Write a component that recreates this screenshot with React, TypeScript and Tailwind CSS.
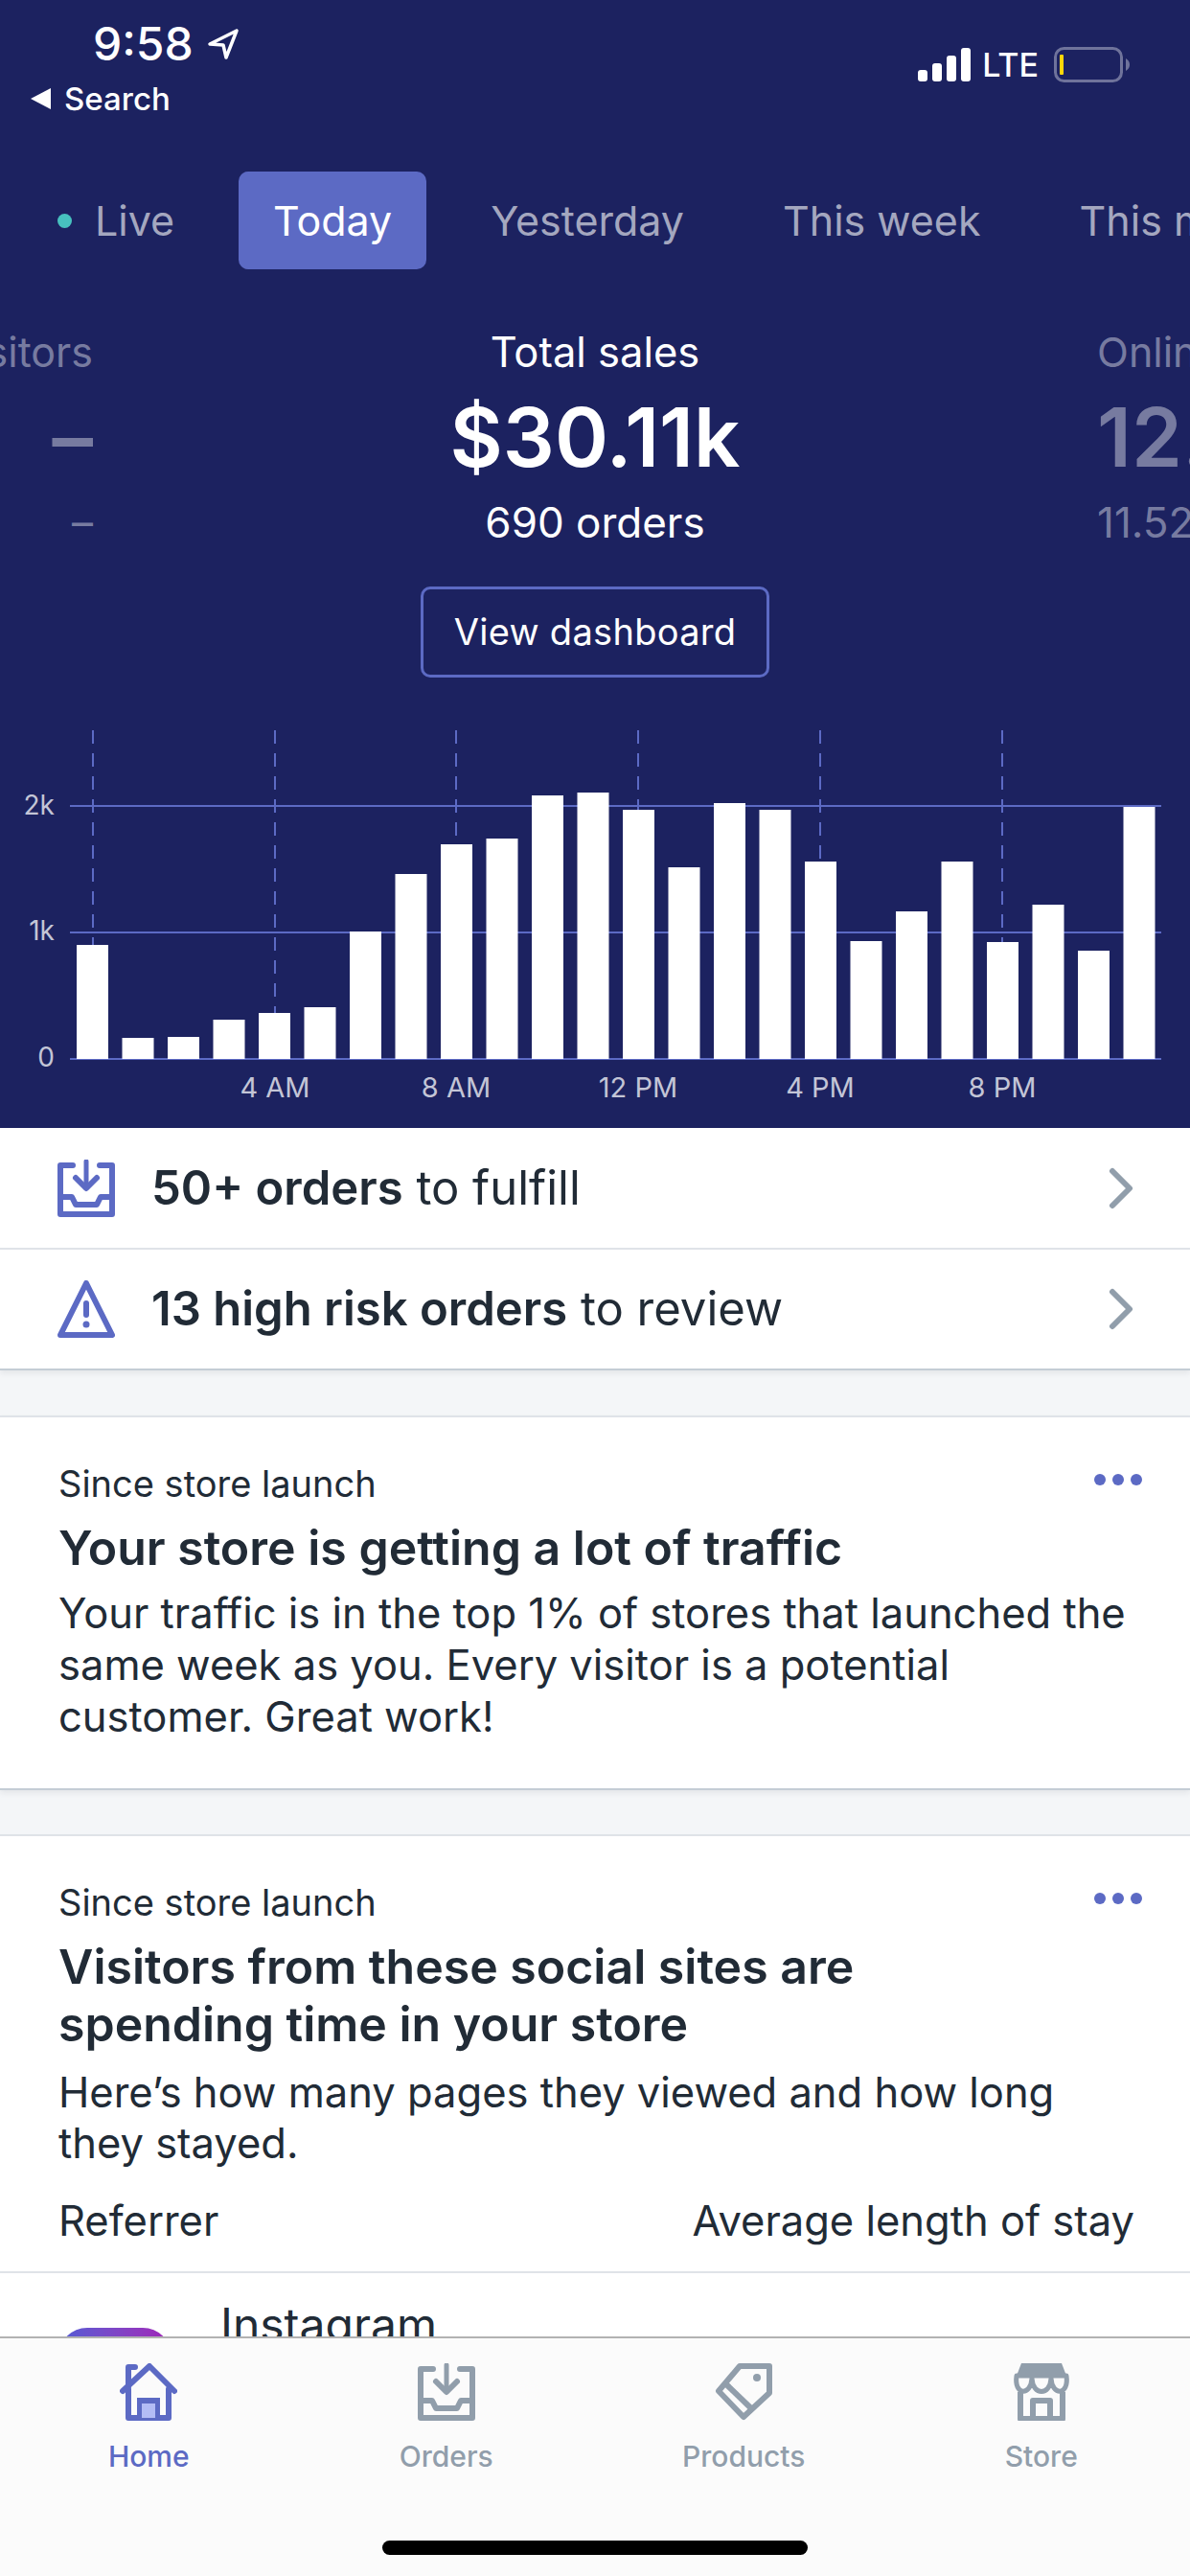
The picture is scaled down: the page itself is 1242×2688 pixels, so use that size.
// Shopify home screen: sales header, alerts and insight cards
import React from "react";

// top of each bar in page pixels, baseline is 1105
const barTops = [986, 1083, 1082, 1064, 1057, 1051, 972, 912, 881, 875, 830, 827, 845, 905, 838, 845, 899, 982, 951, 899, 983, 944, 992, 842];
const hourLines = [97, 287, 476, 666, 856, 1046];
const hourLabels = [
  { x: 287, label: "4 AM" },
  { x: 476, label: "8 AM" },
  { x: 666, label: "12 PM" },
  { x: 856, label: "4 PM" },
  { x: 1046, label: "8 PM" },
];

function SalesChart() {
  return (
    <svg width="1242" height="427" viewBox="0 750 1242 427" className="block">
      {hourLines.map((x) => (
        <line key={x} x1={x} x2={x} y1="762" y2="1105" stroke="#5c6ac4" strokeWidth="2" strokeDasharray="14 10" />
      ))}
      {[841, 973, 1105].map((y) => (
        <line key={y} x1="73" x2="1212" y1={y} y2={y} stroke="#5c6ac4" strokeWidth="2" />
      ))}
      {barTops.map((top, i) => (
        <rect key={i} x={80 + i * 47.5} y={top} width="33" height={1105 - top} fill="#fff" />
      ))}
      <g fill="#c3c5d6" fontFamily="Inter, sans-serif">
        <g fontSize="28">
          <text x="57" y="850" textAnchor="end">2k</text>
          <text x="57" y="981" textAnchor="end">1k</text>
          <text x="57" y="1113" textAnchor="end">0</text>
        </g>
        <g fontSize="29">
          {hourLabels.map((h) => (
            <text key={h.label} x={h.x} y="1145" textAnchor="middle">{h.label}</text>
          ))}
        </g>
      </g>
    </svg>
  );
}

function OrdersIcon({ color, className }: { color: string; className?: string }) {
  return (
    <svg viewBox="0 0 60 60" className={className} fill="none" stroke={color} strokeWidth="6">
      <path d="M16 6H3V57H57V6H44" strokeLinejoin="round" strokeLinecap="round" />
      <path d="M3 39H15L19 47H41L45 39H57" strokeLinejoin="round" />
      <path d="M30 2V28" strokeLinecap="round" strokeWidth="5" />
      <path d="M19 19L30 30L41 19" strokeLinecap="round" strokeLinejoin="round" />
    </svg>
  );
}

function RiskIcon() {
  return (
    <svg viewBox="0 0 60 60" className="w-[60px] h-[60px]" fill="none" stroke="#5c6ac4" strokeWidth="6" strokeLinejoin="round" strokeLinecap="round">
      <path d="M30 3L57 57H3Z" />
      <path d="M30 24V36" />
      <circle cx="30" cy="46" r="3.5" fill="#5c6ac4" stroke="none" />
    </svg>
  );
}

function Chevron() {
  return (
    <svg width="30" height="44" viewBox="0 0 30 44" fill="none" stroke="#919eab" strokeWidth="6" strokeLinecap="round" strokeLinejoin="round">
      <path d="M6 4L24 22L6 40" />
    </svg>
  );
}

function HomeIcon() {
  return (
    <svg viewBox="0 0 60 60" className="w-[60px] h-[60px]" fill="none" stroke="#5c6ac4" strokeWidth="6" strokeLinejoin="round" strokeLinecap="round">
      <path d="M3 29L31 3L57 29" />
      <path d="M9 24V4H16" />
      <path d="M9 27V57H51V27" />
      <rect x="18" y="36" width="24" height="24" fill="#5c6ac4" stroke="none" />
      <rect x="23" y="42" width="14" height="15" fill="#b3bcf5" stroke="none" />
    </svg>
  );
}

function TagIcon() {
  return (
    <svg viewBox="0 0 60 60" className="w-[60px] h-[60px]" fill="none" stroke="#919eab" strokeWidth="6" strokeLinejoin="round">
      <path d="M26 3H57V31L30 56L4 29Z" />
      <path d="M12 22L40 49" />
      <circle cx="44" cy="15" r="4" fill="#919eab" stroke="none" />
    </svg>
  );
}

function StoreIcon() {
  return (
    <svg viewBox="0 0 60 60" className="w-[60px] h-[60px]" fill="none" stroke="#919eab" strokeWidth="5" strokeLinejoin="round">
      <path d="M9 0H51L56 13H4Z" fill="#919eab" stroke="none" />
      <path d="M4 13C1 34 19 34 20 16C21 34 39 34 40 16C41 34 59 34 56 13Z" />
      <path d="M8 30V58H52V30" strokeWidth="6" />
      <path d="M21 58V39H39V58" strokeWidth="6" />
    </svg>
  );
}

function InsightCard({ title, children }: { title: React.ReactNode; children: React.ReactNode }) {
  return (
    <div className="bg-white border-t-2 border-[#dfe3e8] px-[61px] pt-[46px]">
      <div className="flex justify-between">
        <p className="text-[38px] leading-[46px]">Since store launch</p>
        <div className="flex gap-[7px] pt-[13px] -mr-[11px] h-[30px]">
          <span className="w-[12px] h-[12px] rounded-full bg-[#5c6ac4]" />
          <span className="w-[12px] h-[12px] rounded-full bg-[#5c6ac4]" />
          <span className="w-[12px] h-[12px] rounded-full bg-[#5c6ac4]" />
        </div>
      </div>
      <h2 className="text-[50px] leading-[60px] font-semibold mt-[14px]">{title}</h2>
      {children}
    </div>
  );
}

export default function App() {
  const tabs = ["Yesterday", "This week", "This month"];

  return (
    <div className="w-[1242px] h-[2688px] flex flex-col overflow-hidden bg-[#f4f6f8] text-[#212b36] font-[Inter,sans-serif]">
      <main className="flex-1 min-h-0 overflow-hidden">
        <header className="bg-[#1c2260] text-white h-[1177px] flex flex-col">
          {/* status bar */}
          <div className="h-[179px] shrink-0 flex justify-between">
            <div>
              <div className="flex items-center gap-[14px] pl-[97px] pt-[18px]">
                <span className="text-[48px] leading-[56px] font-medium">9:58</span>
                <svg width="34" height="34" viewBox="0 0 34 34" fill="none" stroke="#fff" strokeWidth="3.5" strokeLinejoin="round">
                  <path d="M31 3L3 17L17 18L20 31Z" />
                </svg>
              </div>
              <div className="flex items-center gap-[14px] pl-[32px] mt-[10px]">
                <svg width="21" height="22" viewBox="0 0 21 22"><path d="M21 0V22L0 11Z" fill="#fff" /></svg>
                <span className="text-[33px] leading-[38px] font-medium">Search</span>
              </div>
            </div>
            <div className="flex items-center gap-[14px] h-[37px] mt-[49px] pr-[62px]">
              <svg width="55" height="35" viewBox="0 0 55 35" fill="#fff" className="-mr-[2px]">
                <rect x="0" y="23" width="10" height="12" rx="3" />
                <rect x="15" y="16" width="10" height="19" rx="3" />
                <rect x="30" y="8" width="10" height="27" rx="3" />
                <rect x="45" y="0" width="10" height="35" rx="3" />
              </svg>
              <span className="text-[34px] leading-[37px] font-medium">LTE</span>
              <svg width="80" height="37" viewBox="0 0 80 37" fill="none" className="ml-[2px]">
                <rect x="1.5" y="1.5" width="69" height="34" rx="9" stroke="#6f739b" strokeWidth="3" />
                <rect x="6" y="8" width="4" height="21" rx="1" fill="#ffd60a" />
                <path d="M75 12C78 14 79 16 79 18.500C79 21 78 23 75 25Z" fill="#6f739b" />
              </svg>
            </div>
          </div>

          {/* date range tabs */}
          <div className="flex gap-[31px] pl-[23px] h-[102px] shrink-0 overflow-hidden">
            <div className="flex items-center gap-[24px] pl-[37px] pr-[36px] text-[43px] text-[#a4a7bf] shrink-0">
              <span className="w-[15px] h-[15px] rounded-full bg-[#47c1bf]" />
              Live
            </div>
            <div className="flex items-center justify-center w-[196px] text-[43px] bg-[#5c6ac4] rounded-[10px] shrink-0">Today</div>
            {tabs.map((t) => (
              <div key={t} className="flex items-center px-[36px] text-[43px] text-[#a4a7bf] shrink-0 whitespace-nowrap">{t}</div>
            ))}
          </div>

          {/* sales figures */}
          <div className="grid grid-cols-[97px_1fr_97px] mt-[61px] overflow-hidden">
            <div className="flex flex-col items-end text-[#777ba0] whitespace-nowrap">
              <p className="text-[43px] leading-[50px]">Visitors</p>
              <p className="text-[85px] leading-[100px] font-semibold mt-[15px]">–</p>
              <p className="text-[44px] leading-[50px] mt-[13px]">–</p>
            </div>
            <div className="flex flex-col items-center">
              <p className="text-[43.5px] leading-[50px]">Total sales</p>
              <p className="text-[85px] leading-[100px] font-semibold mt-[15px]">$30.11k</p>
              <p className="text-[44px] leading-[50px] mt-[13px]">690 orders</p>
              <div className="mt-[42px] w-[364px] h-[95px] flex items-center justify-center border-[3px] border-[#5c6ac4] rounded-[10px] text-[38px] tracking-[0.3px]">
                View dashboard
              </div>
            </div>
            <div className="flex flex-col text-[#777ba0] whitespace-nowrap">
              <p className="text-[43px] leading-[50px]">Online</p>
              <p className="text-[85px] leading-[100px] font-semibold mt-[15px]">12.5k</p>
              <p className="text-[44px] leading-[50px] mt-[13px]">11.52</p>
            </div>
          </div>

          <div className="mt-auto">
            <SalesChart />
          </div>
        </header>

        {/* alerts */}
        <section className="bg-white border-b-2 border-[#c4cdd5] shadow-[0_3px_6px_rgba(33,43,54,0.08)]">
          <div className="h-[127px] flex items-center pl-[60px] pr-[57px] border-b-2 border-[#dfe3e8]">
            <OrdersIcon color="#5c6ac4" className="w-[60px] h-[60px]" />
            <p className="text-[49px] ml-[38px] flex-1"><span className="font-semibold">50+ orders</span> to fulfill</p>
            <Chevron />
          </div>
          <div className="h-[124px] flex items-center pl-[60px] pr-[57px]">
            <RiskIcon />
            <p className="text-[49px] ml-[38px] flex-1"><span className="font-semibold">13 high risk orders</span> to review</p>
            <Chevron />
          </div>
        </section>

        <div className="h-[47px]" />

        <div className="shadow-[0_3px_6px_rgba(33,43,54,0.08)] border-b-2 border-[#c4cdd5]">
          <InsightCard title="Your store is getting a lot of traffic">
            <p className="text-[43.5px] leading-[54px] mt-[11px] pb-[48px]">
              Your traffic is in the top 1% of stores that launched the same week as you. Every visitor is a potential customer. Great work!
            </p>
          </InsightCard>
        </div>

        <div className="h-[46px]" />

        <InsightCard
          title={
            <>
              Visitors from these social sites are
              <br />
              spending time in your store
            </>
          }
        >
          <p className="text-[43.5px] leading-[53px] mt-[15px]">
            Here’s how many pages they viewed and how long they stayed.
          </p>
          <div className="flex justify-between text-[43.5px] leading-[52px] mt-[28px] pb-[27px]">
            <span>Referrer</span>
            <span className="-mr-[3px]">Average length of stay</span>
          </div>
        </InsightCard>
        <div className="bg-white border-t-2 border-[#dfe3e8] flex gap-[51px] pl-[61px] h-[200px]">
          <div className="w-[118px] h-[118px] mt-[57px] rounded-[30px] bg-gradient-to-r from-[#4f5bd5] to-[#a01fb8]" />
          <p className="text-[48px] leading-[56px] mt-[26px]">Instagram</p>
        </div>
      </main>

      {/* bottom tab bar */}
      <nav className="h-[250px] shrink-0 bg-[#fbfbfb] border-t-2 border-[#b2b2b2] flex flex-col">
        <div className="grid grid-cols-4 pt-[26px]">
          <div className="flex flex-col items-center text-[#5c6ac4]">
            <HomeIcon />
            <span className="text-[30px] leading-[36px] font-medium mt-[19px]">Home</span>
          </div>
          <div className="flex flex-col items-center text-[#919eab]">
            <OrdersIcon color="#919eab" className="w-[60px] h-[60px]" />
            <span className="text-[30px] leading-[36px] font-medium mt-[19px]">Orders</span>
          </div>
          <div className="flex flex-col items-center text-[#919eab]">
            <TagIcon />
            <span className="text-[30px] leading-[36px] font-medium mt-[19px]">Products</span>
          </div>
          <div className="flex flex-col items-center text-[#919eab]">
            <StoreIcon />
            <span className="text-[30px] leading-[36px] font-medium mt-[19px]">Store</span>
          </div>
        </div>
        <div className="w-[444px] h-[15px] rounded-full bg-black mx-auto mt-[70px]" />
      </nav>
    </div>
  );
}
